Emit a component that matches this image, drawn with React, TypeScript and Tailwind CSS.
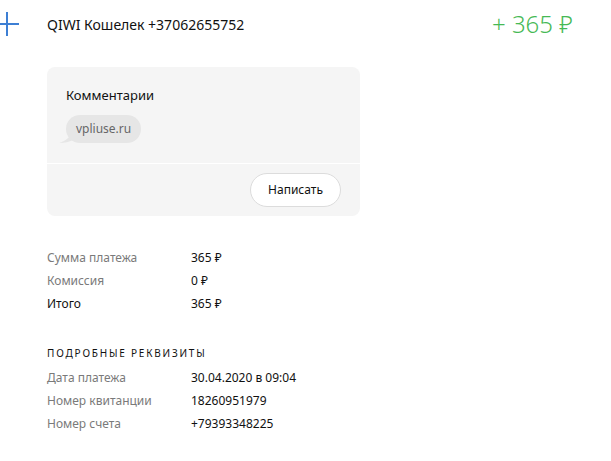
import React from "react";

const font = { fontFamily: '"Noto Sans", "Open Sans", sans-serif' };

function Row({ label, value, strong }: { label: string; value: string; strong?: boolean }) {
  return (
    <div className="flex h-[23px] items-center text-[12px]">
      <div className={`w-[144px] ${strong ? "text-[#111]" : "text-[#7a7a7a]"}`}>{label}</div>
      <div className="text-[#111]">{value}</div>
    </div>
  );
}

export default function App() {
  return (
    <div className="h-[461px] w-[611px] bg-white relative overflow-hidden" style={font}>
      <svg className="absolute left-[-5px] top-[12px]" width="24" height="24" viewBox="0 0 24 24">
        <path d="M0 12H24M12 0V24" stroke="#3d7fd4" strokeWidth="2" />
      </svg>
      <div className="pl-[47px] pr-[38px]">
        <div className="flex h-[42px] items-start justify-between pt-[9px]">
          <div className="pt-[5px] text-[14px] text-[#111]">QIWI Кошелек +37062655752</div>
          <div className="text-[24px] font-light leading-[30px] text-[#46b955]">+ 365 ₽</div>
        </div>
        <div className="mt-[25px] w-[313px] rounded-[8px] bg-[#f5f5f5]">
          <div className="px-[19px] pt-[19px] pb-[20px]">
            <div className="text-[13px] text-[#111] leading-[18px]">Комментарии</div>
            <div className="relative mt-[11px] inline-block">
              <svg className="absolute left-[-7px] bottom-0" width="14" height="12" viewBox="0 0 14 12">
                <path d="M14 0 C12 6 6 10 0 12 C6 12 10 11 14 9 Z" fill="#e6e6e6" />
              </svg>
              <div className="relative rounded-full bg-[#e6e6e6] px-[10px] h-[28px] flex items-center text-[12px] text-[#666]">
                vpliuse.ru
              </div>
            </div>
          </div>
          <div className="h-px bg-white" />
          <div className="flex justify-end px-[19px] py-[9px]">
            <button className="h-[34px] w-[91px] rounded-full border border-[#dcdcdc] bg-white text-[12px] text-[#111]">
              Написать
            </button>
          </div>
        </div>
        <div className="mt-[30px]">
          <Row label="Сумма платежа" value="365 ₽" />
          <Row label="Комиссия" value="0 ₽" />
          <Row label="Итого" value="365 ₽" strong />
        </div>
        <div className="mt-[31px] text-[10px] tracking-[0.18em] text-[#111] leading-[14px]">ПОДРОБНЫЕ РЕКВИЗИТЫ</div>
        <div className="mt-[6px]">
          <Row label="Дата платежа" value="30.04.2020 в 09:04" />
          <Row label="Номер квитанции" value="18260951979" />
          <Row label="Номер счета" value="+79393348225" />
        </div>
      </div>
    </div>
  );
}
